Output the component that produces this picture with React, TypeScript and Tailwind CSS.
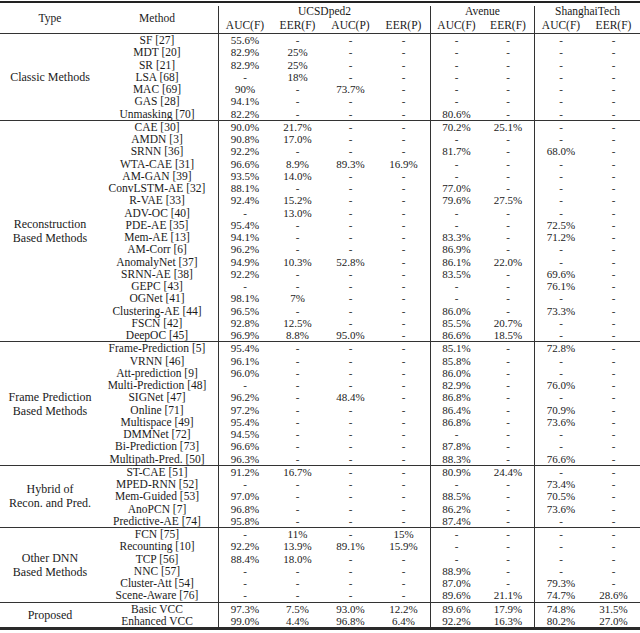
import React from "react";

// results table: UCSDped2 / Avenue / ShanghaiTech
type Group = { type: string[]; rows: string[][] };

const groups: Group[] = [
  {
    type: ["Classic Methods"],
    rows: [
      ["SF [27]", "55.6%", "-", "-", "-", "-", "-", "-", "-"],
      ["MDT [20]", "82.9%", "25%", "-", "-", "-", "-", "-", "-"],
      ["SR [21]", "82.9%", "25%", "-", "-", "-", "-", "-", "-"],
      ["LSA [68]", "-", "18%", "-", "-", "-", "-", "-", "-"],
      ["MAC [69]", "90%", "-", "73.7%", "-", "-", "-", "-", "-"],
      ["GAS [28]", "94.1%", "-", "-", "-", "-", "-", "-", "-"],
      ["Unmasking [70]", "82.2%", "-", "-", "-", "80.6%", "-", "-", "-"],
    ],
  },
  {
    type: ["Reconstruction", "Based Methods"],
    rows: [
      ["CAE [30]", "90.0%", "21.7%", "-", "-", "70.2%", "25.1%", "-", "-"],
      ["AMDN [3]", "90.8%", "17.0%", "-", "-", "-", "-", "-", "-"],
      ["SRNN [36]", "92.2%", "-", "-", "-", "81.7%", "-", "68.0%", "-"],
      ["WTA-CAE [31]", "96.6%", "8.9%", "89.3%", "16.9%", "-", "-", "-", "-"],
      ["AM-GAN [39]", "93.5%", "14.0%", "-", "-", "-", "-", "-", "-"],
      ["ConvLSTM-AE [32]", "88.1%", "-", "-", "-", "77.0%", "-", "-", "-"],
      ["R-VAE [33]", "92.4%", "15.2%", "-", "-", "79.6%", "27.5%", "-", "-"],
      ["ADV-OC [40]", "-", "13.0%", "-", "-", "-", "-", "-", "-"],
      ["PDE-AE [35]", "95.4%", "-", "-", "-", "-", "-", "72.5%", "-"],
      ["Mem-AE [13]", "94.1%", "-", "-", "-", "83.3%", "-", "71.2%", "-"],
      ["AM-Corr [6]", "96.2%", "-", "-", "-", "86.9%", "-", "-", "-"],
      ["AnomalyNet [37]", "94.9%", "10.3%", "52.8%", "-", "86.1%", "22.0%", "-", "-"],
      ["SRNN-AE [38]", "92.2%", "-", "-", "-", "83.5%", "-", "69.6%", "-"],
      ["GEPC [43]", "-", "-", "-", "-", "-", "-", "76.1%", "-"],
      ["OGNet [41]", "98.1%", "7%", "-", "-", "-", "-", "-", "-"],
      ["Clustering-AE [44]", "96.5%", "-", "-", "-", "86.0%", "-", "73.3%", "-"],
      ["FSCN [42]", "92.8%", "12.5%", "-", "-", "85.5%", "20.7%", "-", "-"],
      ["DeepOC [45]", "96.9%", "8.8%", "95.0%", "-", "86.6%", "18.5%", "-", "-"],
    ],
  },
  {
    type: ["Frame Prediction", "Based Methods"],
    rows: [
      ["Frame-Prediction [5]", "95.4%", "-", "-", "-", "85.1%", "-", "72.8%", "-"],
      ["VRNN [46]", "96.1%", "-", "-", "-", "85.8%", "-", "-", "-"],
      ["Att-prediction [9]", "96.0%", "-", "-", "-", "86.0%", "-", "-", "-"],
      ["Multi-Prediction [48]", "-", "-", "-", "-", "82.9%", "-", "76.0%", "-"],
      ["SIGNet [47]", "96.2%", "-", "48.4%", "-", "86.8%", "-", "-", "-"],
      ["Online [71]", "97.2%", "-", "-", "-", "86.4%", "-", "70.9%", "-"],
      ["Multispace [49]", "95.4%", "-", "-", "-", "86.8%", "-", "73.6%", "-"],
      ["DMMNet [72]", "94.5%", "-", "-", "-", "-", "-", "-", "-"],
      ["Bi-Prediction [73]", "96.6%", "-", "-", "-", "87.8%", "-", "-", "-"],
      ["Multipath-Pred. [50]", "96.3%", "-", "-", "-", "88.3%", "-", "76.6%", "-"],
    ],
  },
  {
    type: ["Hybrid of", "Recon. and Pred."],
    rows: [
      ["ST-CAE [51]", "91.2%", "16.7%", "-", "-", "80.9%", "24.4%", "-", "-"],
      ["MPED-RNN [52]", "-", "-", "-", "-", "-", "-", "73.4%", "-"],
      ["Mem-Guided [53]", "97.0%", "-", "-", "-", "88.5%", "-", "70.5%", "-"],
      ["AnoPCN [7]", "96.8%", "-", "-", "-", "86.2%", "-", "73.6%", "-"],
      ["Predictive-AE [74]", "95.8%", "-", "-", "-", "87.4%", "-", "-", "-"],
    ],
  },
  {
    type: ["Other DNN", "Based Methods"],
    rows: [
      ["FCN [75]", "-", "11%", "-", "15%", "-", "-", "-", "-"],
      ["Recounting [10]", "92.2%", "13.9%", "89.1%", "15.9%", "-", "-", "-", "-"],
      ["TCP [56]", "88.4%", "18.0%", "-", "-", "-", "-", "-", "-"],
      ["NNC [57]", "-", "-", "-", "-", "88.9%", "-", "-", "-"],
      ["Cluster-Att [54]", "-", "-", "-", "-", "87.0%", "-", "79.3%", "-"],
      ["Scene-Aware [76]", "-", "-", "-", "-", "89.6%", "21.1%", "74.7%", "28.6%"],
    ],
  },
  {
    type: ["Proposed"],
    rows: [
      ["Basic VCC", "97.3%", "7.5%", "93.0%", "12.2%", "89.6%", "17.9%", "74.8%", "31.5%"],
      ["Enhanced VCC", "99.0%", "4.4%", "96.8%", "6.4%", "92.2%", "16.3%", "80.2%", "27.0%"],
    ],
  },
];

// one class per column of a data row (method + 8 value columns)
const cellCls = [
  "w-[118px] pr-[4px] text-[11.5px]",
  "w-[53px] border-l border-[#333]",
  "w-[53px]",
  "w-[53px]",
  "w-[53px]",
  "w-[52px] border-l border-[#333]",
  "w-[52px]",
  "w-[53px] border-l border-[#333]",
  "w-[53px]",
];

function DataRow({ cells }: { cells: string[] }) {
  return (
    <div className="flex h-[12.25px]">
      {cells.map((c, i) => (
        <div key={i} className={`${cellCls[i]} shrink-0 flex items-center justify-center whitespace-nowrap`}>
          {c}
        </div>
      ))}
    </div>
  );
}

function Header() {
  return (
    <div className="flex h-[30px] text-[11.5px]">
      <div className="w-[100px] shrink-0 flex items-center justify-center">Type</div>
      <div className="w-[118px] shrink-0 pr-[4px] flex items-center justify-center">Method</div>
      <div className="flex flex-col">
        <div className="h-[3px]" />
        <div className="flex h-[27px]">
          <div className="w-[212px] border-l border-[#333] flex flex-col">
            <div className="h-[11px] flex items-center justify-center">UCSDped2</div>
            <div className="flex h-[16px] items-center">
              <div className="w-[52px] text-center">AUC(F)</div>
              <div className="w-[53px] text-center">EER(F)</div>
              <div className="w-[53px] text-center">AUC(P)</div>
              <div className="w-[53px] text-center">EER(P)</div>
            </div>
          </div>
          <div className="w-[104px] border-l border-[#333] flex flex-col">
            <div className="h-[11px] flex items-center justify-center">Avenue</div>
            <div className="flex h-[16px] items-center">
              <div className="w-[51px] text-center">AUC(F)</div>
              <div className="w-[52px] text-center">EER(F)</div>
            </div>
          </div>
          <div className="w-[106px] border-l border-[#333] flex flex-col">
            <div className="h-[11px] flex items-center justify-center">ShanghaiTech</div>
            <div className="flex h-[16px] items-center">
              <div className="w-[52px] text-center">AUC(F)</div>
              <div className="w-[53px] text-center">EER(F)</div>
            </div>
          </div>
        </div>
      </div>
    </div>
  );
}

export default function App() {
  return (
    <div className="w-[640px] h-[633px] bg-white overflow-hidden font-['Liberation_Serif',serif] text-[11px] leading-[12.25px] text-[#1a1a1a]">
      <div className="mt-[1px] h-[2px] bg-[#222]" />
      <Header />
      {groups.map((g, gi) => (
        <div key={gi}>
          <div className="h-px bg-[#333]" />
          <div className="flex">
            <div className="w-[100px] shrink-0 flex flex-col items-center justify-center text-[12px] leading-[14px]">
              {g.type.map((t) => (
                <div key={t}>{t}</div>
              ))}
            </div>
            <div className="flex flex-col">
              {g.rows.map((r) => (
                <DataRow key={r[0]} cells={r} />
              ))}
            </div>
          </div>
        </div>
      ))}
      <div className="h-[3px] bg-[#2a2a2a]" />
    </div>
  );
}
